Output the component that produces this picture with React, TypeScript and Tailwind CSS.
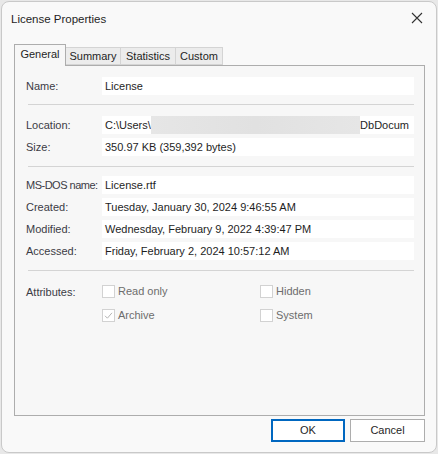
import React from 'react';

const font = { fontFamily: '"Liberation Sans", Arial, sans-serif' };

function Field({ label, tight, children }: { label: string; tight?: boolean; children: React.ReactNode }) {
  return (
    <div className="flex items-center h-[18px]">
      <div className={tight ? 'w-[76px] shrink-0 whitespace-nowrap text-[#3b3b45] tracking-[-0.5px]' : 'w-[76px] shrink-0 whitespace-nowrap text-[#3b3b45]'}>
        {label}
      </div>
      <div className="flex-1 h-[18px] bg-white flex items-center pl-[3px] overflow-hidden whitespace-nowrap text-[#1e1e1e]">
        {children}
      </div>
    </div>
  );
}

function Sep() {
  return <div className="ml-[2px] h-px bg-[#d4d4d4]" />;
}

function Check({ label, checked }: { label: string; checked?: boolean }) {
  return (
    <div className="flex items-center gap-[3px] h-[14px]">
      <div className="w-[13px] h-[13px] border border-[#d2d2d2] bg-white flex items-center justify-center">
        {checked && (
          <svg width="9" height="9" viewBox="0 0 9 9">
            <path d="M1 4.8 L3.4 7.2 L8 1.8" fill="none" stroke="#b4b4b4" strokeWidth="1" />
          </svg>
        )}
      </div>
      <span className="text-[#6d6d6d]">{label}</span>
    </div>
  );
}

export default function App() {
  return (
    <div className="w-[438px] h-[454px] bg-[#e8e8e8] p-px" style={font}>
      <div className="w-full h-full rounded-lg border border-[#c9c9c9] bg-[#f9f9f9] flex flex-col text-[11px] overflow-hidden">
        {/* Title bar */}
        <div className="h-[40px] flex items-start justify-between pl-[9px] pr-[13px] pt-[9px] text-[11.5px]">
          <span className="text-[#1f1f1f]">License Properties</span>
          <svg width="12" height="12" viewBox="0 0 12 12" className="mt-[1px]">
            <path d="M1 1 L11 11 M11 1 L1 11" stroke="#333" strokeWidth="1.1" />
          </svg>
        </div>

        {/* Tabs */}
        <div className="flex items-end pl-[12px] h-[23px]">
          <div className="h-[22px] w-[52px] border border-b-0 border-[#adadad] bg-[#f7f7f7] flex items-center justify-center text-[#1f1f1f] relative z-10 -mb-px pb-[3px]">
            General
          </div>
          <div className="h-[18px] w-[55px] border border-l-0 border-[#d4d4d4] bg-[#ececec] flex items-center justify-center text-[#1f1f1f]">
            Summary
          </div>
          <div className="h-[18px] w-[55px] border border-l-0 border-[#d4d4d4] bg-[#ececec] flex items-center justify-center text-[#1f1f1f]">
            Statistics
          </div>
          <div className="h-[18px] w-[47px] border border-l-0 border-[#d4d4d4] bg-[#ececec] flex items-center justify-center text-[#1f1f1f]">
            Custom
          </div>
        </div>

        {/* Panel */}
        <div className="ml-[12px] mr-[11px] h-[351px] border border-[#adadad] bg-[#f7f7f7] pt-[11px] pl-[11px] pr-[10px] flex flex-col">
          <Field label="Name:">License</Field>
          <div className="h-[9px]" />
          <Sep />
          <div className="h-[11px]" />
          <div className="flex flex-col gap-[4px]">
            <Field label="Location:">
              <span>C:\Users\</span>
              <span className="h-[18px] flex-1 bg-gradient-to-r from-[#e6e6e6] via-[#e1e1e1] to-[#e6e6e6]" />
              <span className="pr-[5px]">DbDocum</span>
            </Field>
            <Field label="Size:">350.97 KB (359,392 bytes)</Field>
          </div>
          <div className="h-[10px]" />
          <Sep />
          <div className="h-[9px]" />
          <div className="flex flex-col gap-[4px]">
            <Field label="MS-DOS name:" tight>License.rtf</Field>
            <Field label="Created:">Tuesday, January 30, 2024 9:46:55 AM</Field>
            <Field label="Modified:">Wednesday, February 9, 2022 4:39:47 PM</Field>
            <Field label="Accessed:">Friday, February 2, 2024 10:57:12 AM</Field>
          </div>
          <div className="h-[10px]" />
          <Sep />
          <div className="h-[13px]" />
          <div className="flex">
            <div className="w-[76px] shrink-0 text-[#3b3b45]">Attributes:</div>
            <div className="grid grid-cols-[158px_1fr] gap-y-[10px]">
              <Check label="Read only" />
              <Check label="Hidden" />
              <Check label="Archive" checked />
              <Check label="System" />
            </div>
          </div>
        </div>

        {/* Buttons */}
        <div className="flex justify-end gap-[5px] mr-[11px] mt-[3px]">
          <button className="w-[74px] h-[23px] border-2 border-[#0067c0] bg-white text-[#1f1f1f]">OK</button>
          <button className="w-[75px] h-[23px] border border-[#adadad] bg-white text-[#1f1f1f]">Cancel</button>
        </div>
      </div>
    </div>
  );
}
